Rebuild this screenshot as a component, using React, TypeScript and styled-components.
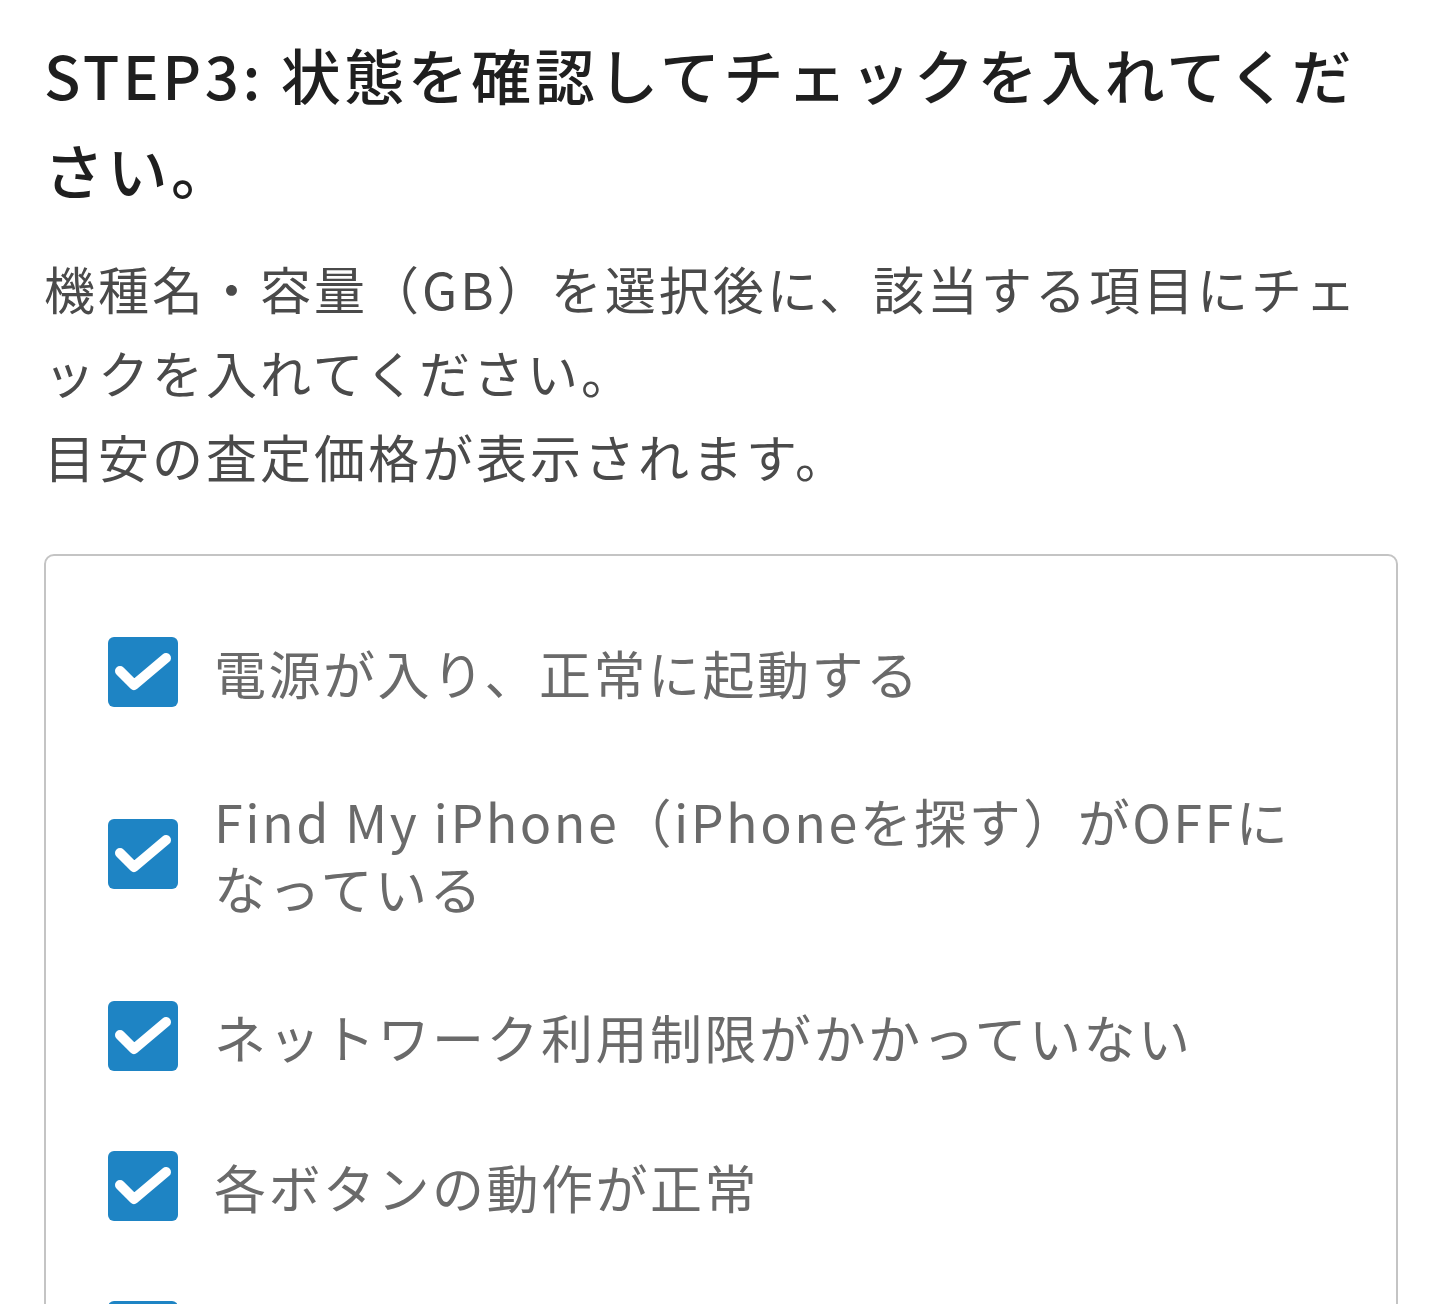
import React from 'react';
import styled, { createGlobalStyle } from 'styled-components';

const GlobalStyle = createGlobalStyle`
	html, body {
		margin: 0;
		padding: 0;
		background: #ffffff;
	}
	body {
		font-family: "Noto Sans CJK JP", "Noto Sans", sans-serif;
	}
`;

const Page = styled.div`
	width: 1440px;
	height: 1304px;
	overflow: hidden;
	box-sizing: border-box;
	padding: 26px 42px 0 44px;
`;

const Title = styled.h2`
	margin: 0;
	font-size: 60px;
	line-height: 95px;
	font-weight: 500;
	color: #1f1f1f;
	letter-spacing: 3.5px;
`;

const Lead = styled.p`
	margin: 30px 0 0;
	font-size: 51px;
	line-height: 84px;
	font-weight: 400;
	color: #4a4a4a;
	letter-spacing: 3px;
`;

const CheckPanel = styled.div`
	margin-top: 56px;
	border: 2px solid #c4c4c4;
	border-radius: 10px;
	padding: 81px 40px 80px 62px;
	display: flex;
	flex-direction: column;
	gap: 80px;
`;

const Item = styled.label`
	display: flex;
	align-items: center;
	gap: 36px;
`;

const Box = styled.span`
	flex: 0 0 70px;
	width: 70px;
	height: 70px;
	border-radius: 6px;
	background: #1e84c4;
	display: flex;
`;

const Label = styled.span`
	font-size: 52px;
	line-height: 67px;
	color: #6a6a6a;
	letter-spacing: 2.5px;
	max-width: 1100px;
`;

const items = [
	'電源が入り、正常に起動する',
	'Find My iPhone（iPhoneを探す）がOFFになっている',
	'ネットワーク利用制限がかかっていない',
	'各ボタンの動作が正常',
	'液晶画面に割れ・表示不良がない',
];

function Check() {
	return (
		<svg width="70" height="70" viewBox="0 0 70 70" fill="none">
			<path d="M12 34 L26 48 L58 21" stroke="#ffffff" strokeWidth="10" strokeLinecap="round" strokeLinejoin="round" />
		</svg>
	);
}

export default function App() {
	return (
		<>
			<GlobalStyle />
			<Page>
				<Title>STEP3: 状態を確認してチェックを入れてください。</Title>
				<Lead>
					機種名・容量（GB）を選択後に、該当する項目にチェックを入れてください。
					<br />
					目安の査定価格が表示されます。
				</Lead>
				<CheckPanel>
					{items.map((text) => (
						<Item key={text}>
							<Box>
								<Check />
							</Box>
							<Label>{text}</Label>
						</Item>
					))}
				</CheckPanel>
			</Page>
		</>
	);
}
